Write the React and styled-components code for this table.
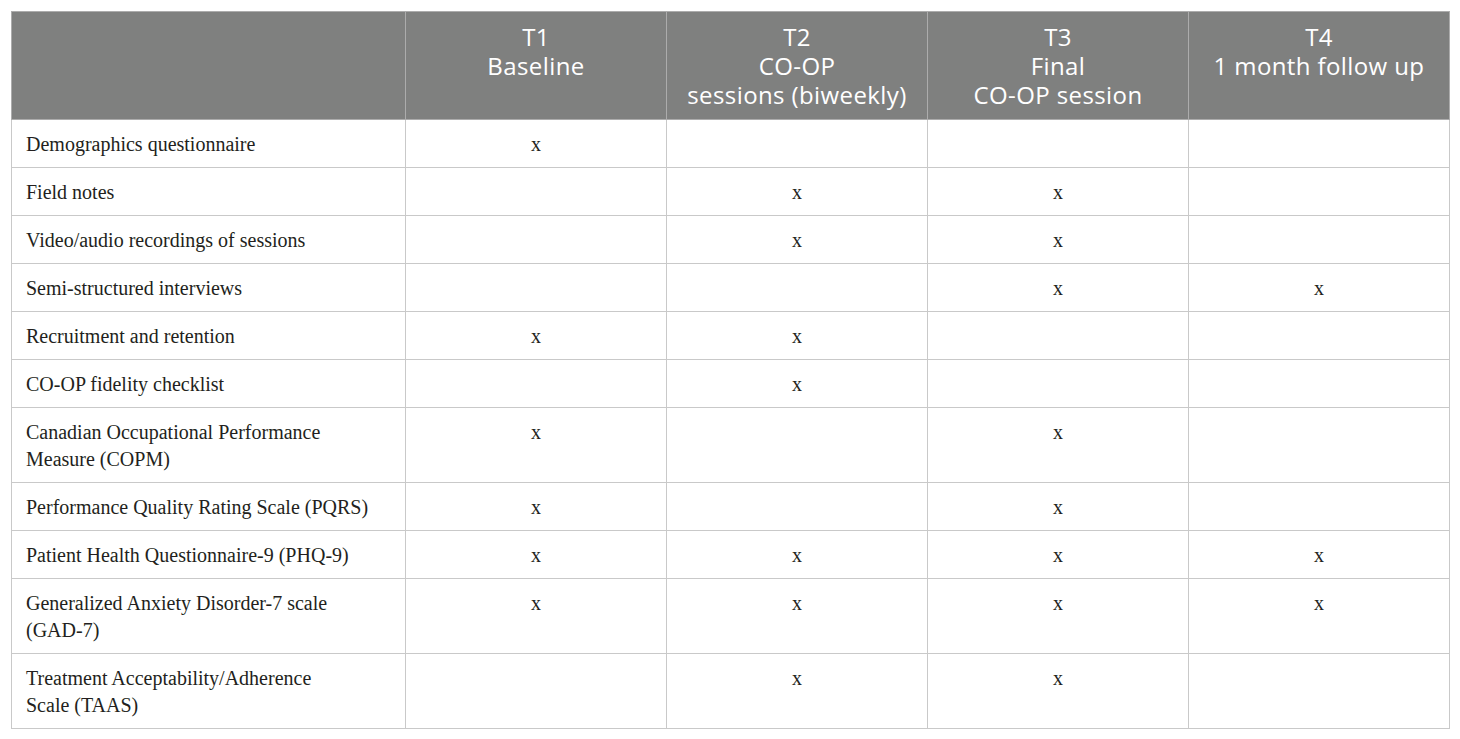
import React from 'react';
import styled, { createGlobalStyle } from 'styled-components';

const GlobalStyle = createGlobalStyle`
  body {
    margin: 0;
    background: #ffffff;
  }
`;

const Page = styled.div`
  padding: 11px 11px;
`;

const Table = styled.table`
  width: 1438px;
  border-collapse: collapse;
  table-layout: fixed;
  border: 1px solid #c9c9c9;
`;

const Col = styled.col`
  width: ${(p) => p.$width}px;
`;

const HeadCell = styled.th`
  box-sizing: border-box;
  background: #7f807f;
  color: #ffffff;
  font-family: 'Open Sans', 'Liberation Sans', sans-serif;
  font-weight: 400;
  font-size: 24px;
  letter-spacing: 0.4px;
  line-height: 29px;
  text-align: center;
  vertical-align: top;
  padding: 10px 4px 0;
  height: 108px;
  border: 1px solid #acacac;
`;

const Cell = styled.td`
  font-family: 'Liberation Serif', 'DejaVu Serif', serif;
  font-size: 20px;
  line-height: 27px;
  color: #231f20;
  vertical-align: top;
  padding: 11px 14px 9px;
  border: 1px solid #c9c9c9;
  text-align: ${(p) => (p.$label ? 'left' : 'center')};
`;

const columns = [
  { width: 394, lines: [] },
  { width: 261, lines: ['T1', 'Baseline'] },
  { width: 261, lines: ['T2', 'CO-OP', 'sessions (biweekly)'] },
  { width: 261, lines: ['T3', 'Final', 'CO-OP session'] },
  { width: 261, lines: ['T4', '1 month follow up'] },
];

const rows = [
  [['Demographics questionnaire'], 1, 0, 0, 0],
  [['Field notes'], 0, 1, 1, 0],
  [['Video/audio recordings of sessions'], 0, 1, 1, 0],
  [['Semi-structured interviews'], 0, 0, 1, 1],
  [['Recruitment and retention'], 1, 1, 0, 0],
  [['CO-OP fidelity checklist'], 0, 1, 0, 0],
  [['Canadian Occupational Performance', 'Measure (COPM)'], 1, 0, 1, 0],
  [['Performance Quality Rating Scale (PQRS)'], 1, 0, 1, 0],
  [['Patient Health Questionnaire-9 (PHQ-9)'], 1, 1, 1, 1],
  [['Generalized Anxiety Disorder-7 scale', '(GAD-7)'], 1, 1, 1, 1],
  [['Treatment Acceptability/Adherence', 'Scale (TAAS)'], 0, 1, 1, 0],
];

const Lines = ({ lines }) =>
  lines.map((line, i) => (
    <React.Fragment key={i}>
      {i > 0 && <br />}
      {line}
    </React.Fragment>
  ));

const App = () => (
  <Page>
    <GlobalStyle />
    <Table>
      <colgroup>
        {columns.map((col, i) => (
          <Col key={i} $width={col.width} />
        ))}
      </colgroup>
      <thead>
        <tr>
          {columns.map((col, i) => (
            <HeadCell key={i}>
              <Lines lines={col.lines} />
            </HeadCell>
          ))}
        </tr>
      </thead>
      <tbody>
        {rows.map(([label, ...marks], r) => (
          <tr key={r}>
            <Cell $label>
              <Lines lines={label} />
            </Cell>
            {marks.map((m, c) => (
              <Cell key={c}>{m ? 'x' : ''}</Cell>
            ))}
          </tr>
        ))}
      </tbody>
    </Table>
  </Page>
);

export default App;
